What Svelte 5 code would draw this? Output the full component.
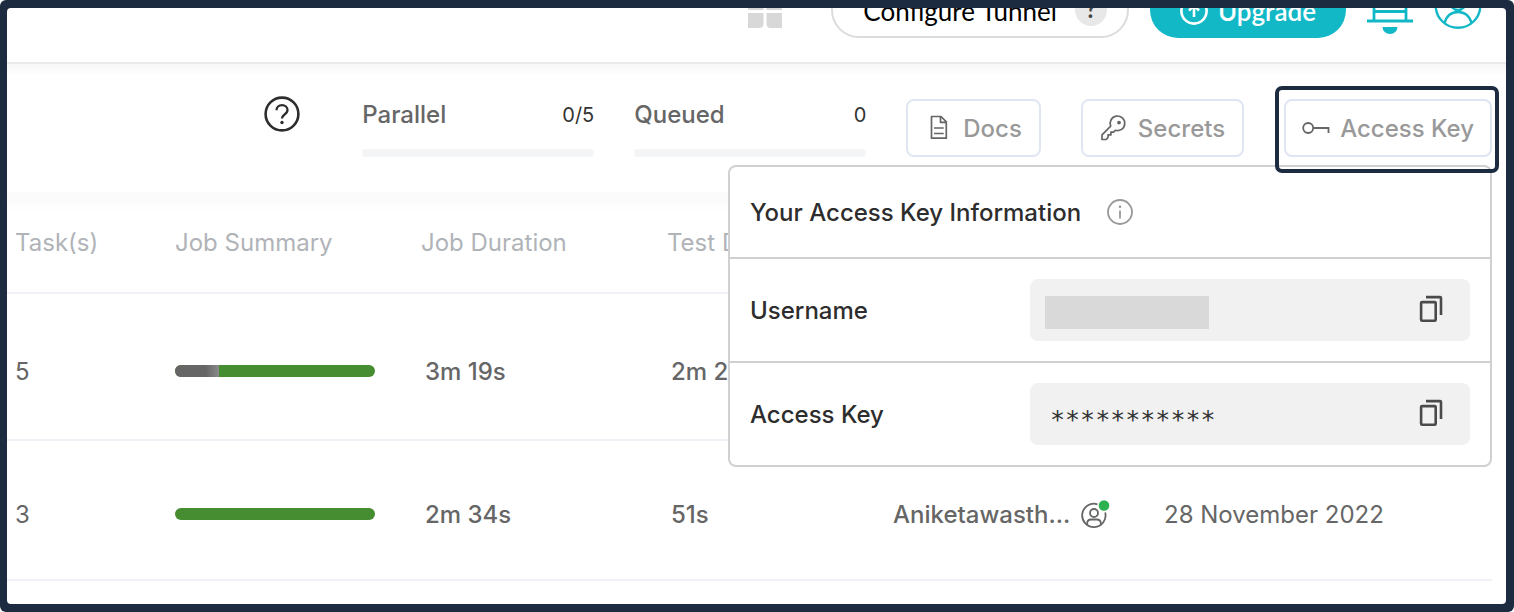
<script>
  const jobs = [
    { tasks: 5, skipped: 22, duration: '3m 19s', test: '2m 21s', user: '', date: '' },
    { tasks: 3, skipped: 0, duration: '2m 34s', test: '51s', user: 'Aniketawasth...', date: '28 November 2022' }
  ];
  const meters = [
    { label: 'Parallel', value: '0/5' },
    { label: 'Queued', value: '0' }
  ];
</script>

{#snippet copyIcon()}
  <svg width="24" height="28" viewBox="0 0 24 28" fill="none" stroke="#4a4a4a" stroke-width="2.6">
    <rect x="2.1" y="7.1" width="14.6" height="18.6" rx="1" />
    <path d="M7 2.1H21a1 1 0 0 1 1 1V20" />
  </svg>
{/snippet}

<div class="frame">
  <div class="page">
    <header class="topbar">
      <svg class="apps" width="34" height="56" viewBox="0 0 34 56" fill="#d8d8d8">
        <path d="M0 12h15.500v16H0zM18.500 12H34v16H18.500z" />
        <path d="M0 31h15.500v10.500q0 4.500-4.500 4.500H0zM18.500 31H34v15H23q-4.500 0-4.500-4.500z" />
      </svg>
      <button class="pill tunnel">
        <span>Configure Tunnel</span>
        <span class="badge">?</span>
      </button>
      <button class="pill upgrade">
        <svg width="28" height="28" viewBox="0 0 28 28" fill="none" stroke="#fff" stroke-width="2.600">
          <circle cx="14" cy="14" r="12.600" />
          <path d="M14 20V9M9 13.500l5-5 5 5" />
        </svg>
        <span>Upgrade</span>
      </button>
      <svg width="46" height="56" viewBox="0 0 46 56" fill="none" stroke="#12b8c6" stroke-width="2.800">
        <path d="M7 38V22a16 16 0 0 1 32 0v16M7 29.500h32M0 39h46" />
        <path d="M15.500 45h15a7.500 7 0 0 1-15 0z" fill="#12b8c6" stroke="none" />
      </svg>
      <svg width="48" height="56" viewBox="0 0 48 56" fill="none" stroke="#12b8c6" stroke-width="2.400">
        <circle cx="24" cy="23.500" r="22.300" />
        <circle cx="24" cy="20" r="8" />
        <path d="M10.500 41c2-7 7-11 13.500-11s11.500 4 13.500 11" />
      </svg>
    </header>

    <section class="toolbar">
      <svg class="help" width="36" height="36" viewBox="0 0 36 36" fill="none" stroke="#2d2d2d" stroke-width="2.600">
        <circle cx="18" cy="18" r="16.400" />
        <path d="M12.500 14.200c0-3 2.400-5 5.500-5s5.500 2 5.500 4.800c0 2.400-1.500 3.500-3.200 4.700-1.500 1.100-2.300 1.900-2.300 3.800" stroke-width="2.300" />
        <circle cx="18" cy="26.500" r="1.700" fill="#2d2d2d" stroke="none" />
      </svg>

      {#each meters as m}
        <div class="meter">
          <div class="meter-head">
            <span>{m.label}</span>
            <b>{m.value}</b>
          </div>
          <div class="track"></div>
        </div>
      {/each}

      <button class="tool">
        <svg width="26" height="28" viewBox="0 0 26 28" fill="none" stroke="#666" stroke-width="1.700">
          <path d="M6.500 2.500h9.500l5.300 5.300V24.200H6.500zM15.500 2.500v5.800H21.300M9 14h9.700M9 19.500h9.700" stroke-linejoin="round" />
        </svg>
        Docs
      </button>
      <button class="tool">
        <svg width="26" height="28" viewBox="0 0 26 28" fill="none" stroke="#666" stroke-width="1.700" stroke-linejoin="round">
          <path d="M10.700 12.100a7.300 7.300 0 1 1 4.600 4.200l-1.800 1.800h-2.600v2.800H8.100v2.400L6.300 25.500H2v-4.600z" />
          <circle cx="19" cy="8.600" r="1.900" fill="#666" stroke="none" />
        </svg>
        Secrets
      </button>
      <div class="access">
        <button class="tool compact" aria-expanded="true">
          <svg width="28" height="28" viewBox="0 0 28 28" fill="none" stroke="#666" stroke-width="1.800">
            <circle cx="6.200" cy="14" r="5" />
            <path d="M11.200 14H26.500v5" />
          </svg>
          Access Key
        </button>

        <div class="popover">
          <h2>
            Your Access Key Information
            <svg width="28" height="28" viewBox="0 0 28 28" fill="none" stroke="#999" stroke-width="1.800">
              <circle cx="14" cy="14" r="12" />
              <path d="M14 12.500v8" />
              <circle cx="14" cy="8.800" r="1.300" fill="#999" stroke="none" />
            </svg>
          </h2>
          <div class="row">
            <span class="label">Username</span>
            <div class="field">
              <span class="redacted"></span>
              <button class="copy" aria-label="Copy username">{@render copyIcon()}</button>
            </div>
          </div>
          <div class="row">
            <span class="label">Access Key</span>
            <div class="field">
              <span class="secret">***********</span>
              <button class="copy" aria-label="Copy access key">{@render copyIcon()}</button>
            </div>
          </div>
        </div>
        <div class="highlight"></div>
      </div>
    </section>

    <main>
      <table>
        <colgroup>
          <col class="c-tasks" /><col class="c-wide" /><col class="c-wide" />
          <col class="c-test" /><col class="c-user" /><col />
        </colgroup>
        <thead>
          <tr>
            <th>Task(s)</th>
            <th>Job Summary</th>
            <th>Job Duration</th>
            <th>Test Duration</th>
            <th></th>
            <th></th>
          </tr>
        </thead>
        <tbody>
          {#each jobs as job}
            <tr>
              <td>{job.tasks}</td>
              <td class="bar">
                <div class="summary">
                  <span class="skipped" style="width: {job.skipped}%"></span>
                </div>
              </td>
              <td class="time">{job.duration}</td>
              <td class="time">{job.test}</td>
              <td class="strong">
                {#if job.user}
                  <div class="user">
                    {job.user}
                    <svg width="30" height="30" viewBox="0 0 30 30" fill="none" stroke="#666" stroke-width="1.800">
                      <path d="M17.500 4.300a11.700 11.700 0 1 0 7.700 8.200" />
                      <circle cx="14" cy="13" r="4" />
                      <path d="M7.200 25v-1.500c0-2.500 1.600-4 4-4h5.600c2.400 0 4 1.500 4 4V25" />
                      <circle cx="24" cy="5.500" r="5.300" fill="#2bb152" stroke="none" />
                    </svg>
                  </div>
                {/if}
              </td>
              <td>{job.date}</td>
            </tr>
          {/each}
        </tbody>
      </table>
    </main>
  </div>
</div>

<style>
  :global(body) { margin: 0; background: #fff; }
  * { box-sizing: border-box; }
  svg { flex: none; display: block; }
  button { font: inherit; cursor: pointer; }

  .frame {
    min-height: 100vh;
    padding: 8px 8px 8px 7px;
    display: flex;
    background: #1d2b41;
    border-radius: 6px;
    font-family: Inter, "Liberation Sans", sans-serif;
    font-size: 24px;
    line-height: 30px;
    color: #666;
  }
  .page {
    flex: 1;
    min-width: 0;
    background: #fff;
    border-radius: 4px;
  }

  .topbar {
    height: 56px;
    padding: 0 24px 24px;
    display: flex;
    align-items: flex-end;
    justify-content: flex-end;
    gap: 21px;
    overflow: hidden;
    border-bottom: 2px solid #ebebeb;
  }
  .apps { margin-right: 28px; }
  .pill {
    flex: none;
    height: 56px;
    display: flex;
    align-items: center;
    border-radius: 28px;
    font-family: Lato, sans-serif;
    font-size: 26px;
    white-space: nowrap;
  }
  .pill > span:not(.badge) { padding-top: 2px; }
  .tunnel {
    padding: 0 20px 0 30px;
    gap: 18px;
    background: #fff;
    border: 2px solid #dcdcdc;
    color: #000;
  }
  .badge {
    width: 32px;
    height: 32px;
    border-radius: 50%;
    background: #e8e8e8;
    color: #444;
    font-size: 24px;
    font-weight: 700;
    text-align: center;
  }
  .upgrade {
    padding: 0 30px;
    gap: 10px;
    border: 0;
    background: #12b8c6;
    color: #fff;
    font-weight: 600;
  }
  .upgrade svg { margin-top: 2px; }

  .toolbar {
    height: 128px;
    padding: 35px 14px 0;
    display: flex;
    align-items: flex-start;
    justify-content: flex-end;
    gap: 40px;
    background: linear-gradient(#f7f7f7, #fff 12px);
  }
  .help { margin: -3px 22px 0 0; }
  .meter { width: 232px; padding-top: 1px; }
  .meter-head {
    display: flex;
    justify-content: space-between;
    font-weight: 500;
  }
  .meter-head b { font-size: 20px; font-weight: 400; color: #333; }
  .track {
    height: 8px;
    margin-top: 19px;
    border-radius: 4px;
    background: #f4f5f7;
  }
  .tool {
    height: 58px;
    padding: 2px 17px 0;
    display: flex;
    align-items: center;
    gap: 12px;
    background: #fff;
    border: 2px solid #e0e6f1;
    border-radius: 8px;
    color: #999;
    font-weight: 500;
    white-space: nowrap;
  }
  .tool svg { margin-bottom: 2px; }
  .compact { padding: 2px 16px 0; gap: 10px; }
  .access { position: relative; }

  .highlight {
    position: absolute;
    inset: -13px -7px -16px -9px;
    border: 4px solid #1d2b41;
    border-radius: 7px;
    pointer-events: none;
  }
  .popover {
    position: absolute;
    top: 66px;
    right: 0;
    width: 764px;
    background: #fff;
    border: 2px solid #d0d0d0;
    border-radius: 8px;
    color: #2d2d2d;
    font-weight: 500;
  }
  h2 {
    margin: 0;
    height: 90px;
    padding: 2px 20px 0;
    display: flex;
    align-items: center;
    gap: 25px;
    font-size: 24px;
    font-weight: 500;
  }
  h2 svg { margin-bottom: 2px; }
  .row {
    padding: 20px;
    display: flex;
    align-items: center;
    justify-content: space-between;
    border-top: 2px solid #d0d0d0;
  }
  .label { padding-top: 2px; }
  .field {
    width: 440px;
    height: 62px;
    padding: 0 27px 0 15px;
    display: flex;
    align-items: center;
    justify-content: space-between;
    background: #f1f1f1;
    border-radius: 8px;
  }
  .redacted { width: 164px; height: 33px; margin-top: 4px; background: #d9d9d9; }
  .secret {
    padding: 12px 0 0 5px;
    font-family: "DejaVu Sans Mono", monospace;
    font-size: 25px;
    font-weight: 400;
    color: #333;
  }
  .copy { padding: 0 0 2px; border: 0; background: none; }

  main { padding-right: 14px; }
  table {
    width: 100%;
    table-layout: fixed;
    border-collapse: separate;
    border-spacing: 0;
    background: linear-gradient(#fbfbfb 11px, #fdfdfd 11px, #fff 22px);
  }
  .c-tasks { width: 160px; }
  .c-wide { width: 246px; }
  .c-test { width: 226px; }
  .c-user { width: 271px; }
  th, td {
    padding: 0 0 0 8px;
    border-bottom: 2px solid #f1f1f7;
    text-align: left;
    white-space: nowrap;
    font-weight: 400;
  }
  th { height: 102px; padding-top: 2px; color: #b0b3b8; }
  td { height: 147px; padding-top: 10px; }
  tr:last-child td { height: 140px; }
  .bar { padding-top: 8px; }
  .time { padding-left: 12px; font-weight: 500; }
  .strong { font-weight: 500; }
  .summary {
    width: 200px;
    height: 12px;
    border-radius: 6px;
    overflow: hidden;
    background: #468c30;
  }
  .skipped {
    display: block;
    height: 100%;
    background: linear-gradient(90deg, #666 70%, #8a8a8a);
  }
  .user { display: flex; align-items: center; gap: 10px; }
</style>
